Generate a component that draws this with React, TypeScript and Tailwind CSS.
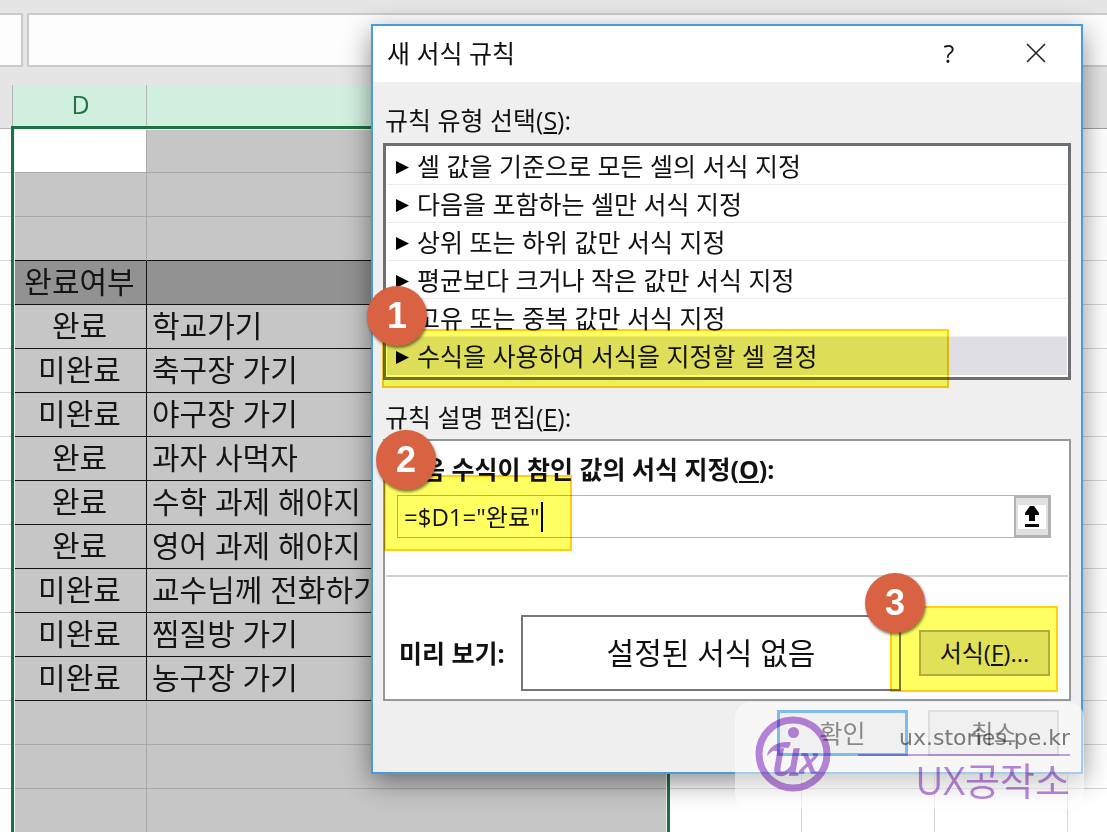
import { useState } from "react";
import { clsx } from "clsx";

const RULE_TYPES = [
  "셀 값을 기준으로 모든 셀의 서식 지정",
  "다음을 포함하는 셀만 서식 지정",
  "상위 또는 하위 값만 서식 지정",
  "평균보다 크거나 작은 값만 서식 지정",
  "고유 또는 중복 값만 서식 지정",
  "수식을 사용하여 서식을 지정할 셀 결정",
];

type RowKind = "first" | "empty" | "beforeTable" | "head" | "data";

interface SheetRow {
  kind: RowKind;
  status?: string;
  task?: string;
}

const ROWS: SheetRow[] = [
  { kind: "first" },
  { kind: "empty" },
  { kind: "beforeTable" },
  { kind: "head", status: "완료여부" },
  { kind: "data", status: "완료", task: "학교가기" },
  { kind: "data", status: "미완료", task: "축구장 가기" },
  { kind: "data", status: "미완료", task: "야구장 가기" },
  { kind: "data", status: "완료", task: "과자 사먹자" },
  { kind: "data", status: "완료", task: "수학 과제 해야지" },
  { kind: "data", status: "완료", task: "영어 과제 해야지" },
  { kind: "data", status: "미완료", task: "교수님께 전화하기" },
  { kind: "data", status: "미완료", task: "찜질방 가기" },
  { kind: "data", status: "미완료", task: "농구장 가기" },
  { kind: "empty" },
  { kind: "empty" },
  { kind: "empty" },
];

function Sheet() {
  return (
    <div className="relative">
      <table className="w-full table-fixed border-separate border-spacing-0">
        <colgroup>
          <col className="w-[13px]" />
          <col className="w-[134px]" />
          <col className="w-[522px]" />
          <col className="w-[133px]" />
          <col className="w-[133px]" />
          <col className="w-[133px]" />
          <col />
        </colgroup>
        <thead>
          <tr className="h-11">
            <th className="border-r border-b border-[#b5b5b5] bg-[#e5e5e5]" />
            <th className="border-r border-[#b5b5b5] bg-[#d2f0e0] p-0 pb-1.5 pl-0.5 text-[25px] leading-8 font-normal text-[#217346]">
              D
            </th>
            <th className="bg-[#d2f0e0]" />
            <th className="border-r border-b border-[#a0a0a0] bg-[#e5e5e5]" />
            <th className="border-r border-b border-[#a0a0a0] bg-[#e5e5e5]" />
            <th className="border-b border-[#a0a0a0] bg-[#e5e5e5]" />
            <th className="border-b border-[#a0a0a0] bg-[#e5e5e5]" />
          </tr>
        </thead>
        <tbody>
          {ROWS.map((row, i) => {
            const inTable = row.kind === "head" || row.kind === "data";
            const cell = clsx(
              "overflow-hidden border-b p-0 pb-0.5 text-[30px] leading-10 whitespace-nowrap text-[#151515]",
              inTable || row.kind === "beforeTable"
                ? "border-b-[#111]"
                : "border-b-[#a9a9a9]",
              row.kind === "head" ? "bg-[#929292]" : "bg-[#c6c6c6]"
            );
            return (
              <tr key={i} className="h-11">
                <td className="border-b border-[#d6d6d6] bg-white" />
                <td
                  className={clsx(
                    cell,
                    "border-r text-center",
                    inTable ? "border-r-[#111]" : "border-r-[#a9a9a9]",
                    row.kind === "first" && "bg-white!"
                  )}
                >
                  {row.status}
                </td>
                <td className={clsx(cell, "pl-[5px]!")}>{row.task}</td>
                <td className="border-r border-b border-[#d6d6d6] bg-white" />
                <td className="border-r border-b border-[#d6d6d6] bg-white" />
                <td className="border-r border-b border-[#d6d6d6] bg-white" />
                <td className="border-b border-[#d6d6d6] bg-white" />
              </tr>
            );
          })}
        </tbody>
      </table>
      {/* 선택 영역 테두리 */}
      <div className="absolute top-[41px] -bottom-2 left-[11px] w-[659px] border-[3px] border-[#1e7145]">
        <div className="h-full border border-[#eef3f0]" />
      </div>
    </div>
  );
}

interface CalloutProps {
  step: number;
  boxClass: string;
  badgeClass: string;
}

/** 노란색 강조 상자와 번호 */
function Callout({ step, boxClass, badgeClass }: CalloutProps) {
  return (
    <span className={clsx("pointer-events-none absolute", boxClass)}>
      <span className="absolute inset-0 border-2 border-[#ffcf10] bg-[#ffff62] mix-blend-multiply" />
      <span
        className={clsx(
          "absolute flex size-[60px] items-center justify-center rounded-full bg-[#d96243] font-['Liberation_Sans',sans-serif] text-4xl font-bold text-white shadow-[1px_2px_3px_rgba(0,0,0,0.5)]",
          badgeClass
        )}
      >
        {step}
      </span>
    </span>
  );
}

function Watermark() {
  return (
    <div className="pointer-events-none absolute top-[702px] right-[23px] h-[107px] w-[349px]">
      <div className="absolute inset-0 rounded-2xl bg-white/50" />
      <div className="absolute inset-0 mix-blend-multiply">
        <svg
          viewBox="0 0 78 78"
          className="absolute top-[13px] left-[19px] size-[78px]"
          fill="none"
          stroke="#ba86dd"
        >
          <circle cx="39" cy="39" r="34" strokeWidth="7" />
          <circle cx="39.500" cy="17.500" r="5.500" fill="#ba86dd" stroke="none" />
          {/* 붓으로 그은 획 */}
          <path
            d="M13 41 C14 32 23 26 36 27 C37 29 36 31 34 33 C27 31 19 34 13 41 Z"
            fill="#ba86dd"
            stroke="none"
          />
          <g
            fill="#ba86dd"
            strokeWidth="1.500"
            fontFamily="Liberation Serif, serif"
            fontStyle="italic"
          >
            <text x="18" y="60" fontSize="58">
              u
            </text>
            <text x="46" y="58" fontSize="40">
              x
            </text>
          </g>
        </svg>
        <div className="ml-[123px] flex flex-col items-end pt-5 pr-[14px]">
          <span className="font-['DejaVu_Sans',sans-serif] text-[22px] leading-8 text-[#808080]">
            ux.stories.pe.kr
          </span>
          <span className="h-0.5 w-full bg-[#c9a2e6]" />
          <span className="text-[38px] leading-[48px] text-[#ba86dd]">UX공작소</span>
        </div>
      </div>
    </div>
  );
}

function NewRuleDialog() {
  const [selected, setSelected] = useState(5);
  const [formula, setFormula] = useState('=$D1="완료"');

  return (
    <div
      role="dialog"
      aria-labelledby="dialog-title"
      className="absolute top-6 right-6 left-[371px] border-2 border-[#4a9ade] bg-[#efefef] text-[25px] leading-8 text-[#111] shadow-[0_8px_26px_rgba(0,0,0,0.45)]"
    >
      <div className="flex h-14 items-center bg-white pb-0.5 pl-3.5">
        <h1 id="dialog-title" className="flex-1">
          새 서식 규칙
        </h1>
        <button type="button" aria-label="도움말" className="w-[84px]">
          ?
        </button>
        <button
          type="button"
          aria-label="닫기"
          className="flex w-[90px] justify-center"
        >
          <svg viewBox="0 0 20 20" className="size-5" stroke="#222" strokeWidth="1.600">
            <path d="M1 1 L19 19 M19 1 L1 19" />
          </svg>
        </button>
      </div>

      <div className="px-2.5 pt-[22px] pb-4">
        <div id="rule-type-label" className="mb-[7px] pl-0.5">
          규칙 유형 선택(<u>S</u>):
        </div>
        <div
          role="listbox"
          aria-labelledby="rule-type-label"
          className="border-[3px] border-[#6c7073] bg-white px-px pt-px pb-0.5"
        >
          {RULE_TYPES.map((name, i) => (
            <div key={name} className="relative">
              <button
                type="button"
                role="option"
                aria-selected={i === selected}
                onClick={() => setSelected(i)}
                className={clsx(
                  "flex h-[38px] w-full items-center gap-2 border-b pl-[9px] text-left",
                  i === selected
                    ? "border-[#dedee4] bg-[#dedee4]"
                    : "border-[#ececec]"
                )}
              >
                <svg viewBox="0 0 13 13" className="mt-1 size-[13px]">
                  <path d="M0 0 L13 6.500 L0 13 Z" fill="#000" />
                </svg>
                {name}
              </button>
              {i === 5 && (
                <Callout
                  step={1}
                  boxClass="-top-2 -left-[5px] h-[59px] w-[567px]"
                  badgeClass="-top-[43px] -left-[15px]"
                />
              )}
            </div>
          ))}
        </div>

        <div className="mt-[21px] mb-1.5 pl-0.5">
          규칙 설명 편집(<u>E</u>):
        </div>
        <div className="border-2 border-[#93989c] bg-white">
          <div className="px-3 pt-3 pr-[18px]">
            <label htmlFor="formula" className="block pl-0.5 font-bold">
              다음 수식이 참인 값의 서식 지정(<u>O</u>):
            </label>
            <div className="relative mt-2.5 flex h-[43px] border border-[#b2b2b6]">
              <input
                id="formula"
                value={formula}
                onChange={(e) => setFormula(e.target.value)}
                className="w-0 flex-1 bg-white pl-1.5 text-2xl outline-none"
              />
              {/* 입력 커서 */}
              <span className="absolute top-1.5 left-[143px] h-[30px] w-0.5 bg-black" />
              <button
                type="button"
                aria-label="범위 선택"
                className="flex w-9 items-center justify-center border-2 border-[#b2b2b6] bg-[#e0e0e0]"
              >
                <span className="flex h-6 w-7 items-center justify-center bg-white">
                  <svg viewBox="0 0 14 21" className="h-[21px] w-3.5">
                    <path d="M5 0 H9 L14 7 V9 H10 V15 H4 V9 H0 V7 Z M0 18 H14 V21 H0 Z" />
                  </svg>
                </span>
              </button>
              <Callout
                step={2}
                boxClass="-top-[21px] -left-[14px] h-[76px] w-[188px]"
                badgeClass="-top-[45px] -left-2"
              />
            </div>
          </div>
          <hr className="mx-px mt-[37px] border-t-2 border-[#cfcfcf]" />
          <div className="flex items-center pt-[38px] pr-[19px] pb-2 pl-3.5">
            <span className="w-[122px] font-bold">미리 보기:</span>
            <div className="flex h-[76px] flex-1 items-center justify-center border-2 border-[#777] text-[30px]">
              설정된 서식 없음
            </div>
            <div className="relative ml-[18px]">
              <button
                type="button"
                className="h-[46px] w-[131px] border-2 border-[#adadad] bg-[#e1e1e1] text-2xl"
              >
                서식(<u>F</u>)...
              </button>
              <Callout
                step={3}
                boxClass="-top-6 -left-[29px] h-[86px] w-[168px]"
                badgeClass="-top-[33px] -left-[25px]"
              />
            </div>
          </div>
        </div>

        <div className="mt-[9px] flex justify-end gap-5 pr-3">
          <button
            type="button"
            className="h-[46px] w-[131px] border-3 border-[#0078d7] bg-[#e1e1e1]"
          >
            확인
          </button>
          <button
            type="button"
            className="h-[46px] w-[131px] border-2 border-[#bdbdbd] bg-[#e1e1e1]"
          >
            취소
          </button>
        </div>
      </div>
    </div>
  );
}

export default function App() {
  return (
    <main className="relative h-screen overflow-hidden bg-[#e5e5e5] font-['Open_Sans','Noto_Sans_CJK_KR',sans-serif]">
      {/* 이름 상자와 수식 입력줄 */}
      <div className="flex h-[85px] gap-1 pt-[13px] pb-[18px]">
        <div className="w-[23px] border-2 border-l-0 border-[#cbcbcb] bg-[#fdfdfd]" />
        <div className="flex-1 border-2 border-r-0 border-[#cbcbcb] bg-[#fdfdfd]" />
      </div>
      <Sheet />
      <NewRuleDialog />
      <Watermark />
    </main>
  );
}
